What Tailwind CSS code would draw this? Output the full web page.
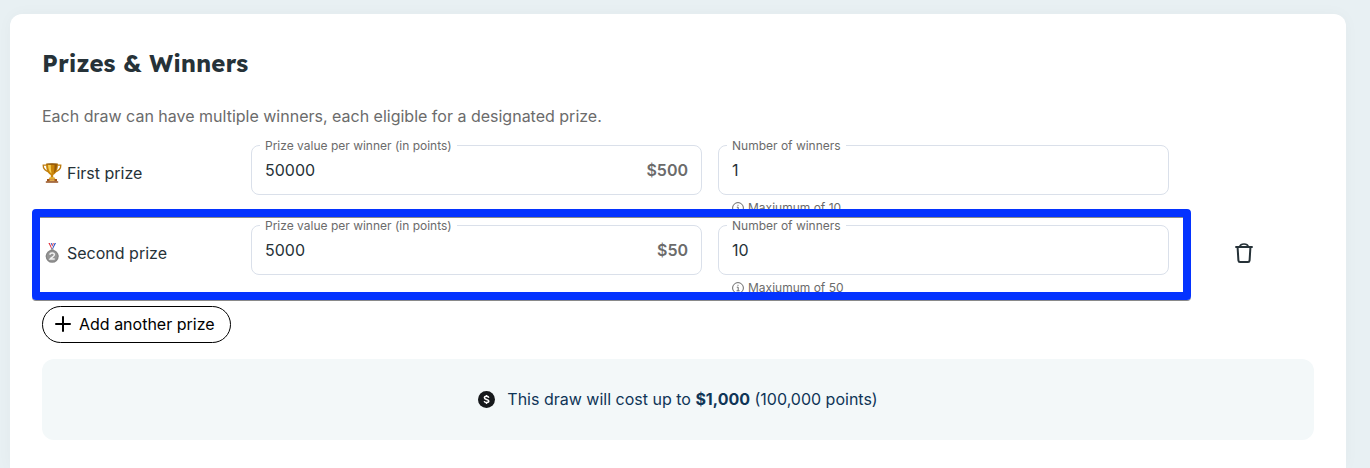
<!DOCTYPE html>
<html lang="en">
<head>
    <meta charset="utf-8">
    <meta name="viewport" content="width=device-width, initial-scale=1">
    <title>Prizes &amp; Winners</title>
    <script src="https://cdn.jsdelivr.net/npm/@tailwindcss/browser@4"></script>
</head>
<body class="min-h-screen overflow-x-hidden bg-[#e8f0f3] font-['Inter',sans-serif] text-base text-[#263238]">
    <main class="flex min-h-screen flex-col pt-3.5 pr-6 pl-2.5">
        <form class="flex-1 rounded-t-xl bg-white p-8 pb-7 shadow-[0_0_16px_rgba(38,50,56,0.03)]">
            <h2 class="mt-px text-2xl leading-8 font-bold font-['Lexend','Inter',sans-serif]">Prizes &amp; Winners</h2>
            <p class="mt-[25px] leading-6 text-[#6b6b6b]">Each draw can have multiple winners, each eligible for a designated prize.</p>

            <div class="mt-[17px]">
                <!-- First prize -->
                <div class="grid h-20 grid-cols-[193fr_451fr_451fr_129fr] gap-x-4">
                    <div class="flex h-14 items-center gap-[5px]">
                        <svg class="size-5 shrink-0" viewBox="0 0 20 20" aria-hidden="true">
                            <path d="M5 2.200H1.200C1 5.500 2.600 7.500 7.500 9.500M15 2.200h3.800C19 5.500 17.400 7.500 12.500 9.500" fill="none" stroke="#bd7d12" stroke-width="1.300"/>
                            <path d="M4 .700h12c0 5.600-1.300 9.400-4.800 11.300v2.700H8.800V12C5.300 10.100 4 6.300 4 .700z" fill="#c98409"/>
                            <path d="M6 1.500h2.800c0 4.200.200 7 .900 9.300C7.200 9.300 6.200 6 6 1.500z" fill="#f7cf55"/>
                            <path d="M12.500 1.500h2.500c-.200 4-1 7-3.200 9 .600-2.700.800-5.500.700-9z" fill="#95590a"/>
                            <ellipse cx="10" cy="1" rx="6" ry=".800" fill="#8a5208"/>
                            <path d="M7.600 14.300h4.800l1 1.700H6.600z" fill="#e2aa2c"/>
                            <path d="M5 16h10v2.300H5z" fill="#a4551a"/>
                            <path d="M7.500 16.400h5v1.400h-5z" fill="#eec25a"/>
                            <path d="M3.800 18.300h12.400v1.400H3.800z" fill="#8d440f"/>
                        </svg>
                        <span>First prize</span>
                    </div>
                    <div class="relative">
                        <label for="value-1" class="absolute -top-[7px] left-[9px] bg-white px-[5px] text-xs leading-4 text-[#6b6b6b]">Prize value per winner (in points)</label>
                        <div class="flex h-[50px] items-center rounded-lg border border-[#dae0ea] px-[13px]">
                            <input id="value-1" type="text" inputmode="numeric" value="50000" class="w-full min-w-0 bg-transparent leading-6 outline-none">
                            <span class="font-semibold text-[#6b6b6b]">$500</span>
                        </div>
                    </div>
                    <div class="relative">
                        <label for="winners-1" class="absolute -top-[7px] left-[9px] bg-white px-[5px] text-xs leading-4 text-[#6b6b6b]">Number of winners</label>
                        <div class="flex h-[50px] items-center rounded-lg border border-[#dae0ea] px-[13px]">
                            <input id="winners-1" type="text" inputmode="numeric" value="1" aria-describedby="hint-1" class="w-full min-w-0 bg-transparent leading-6 outline-none">
                        </div>
                        <p id="hint-1" class="mt-[5px] flex items-center gap-1 pl-3.5 text-xs leading-4 text-[#6b6b6b]">
                            <svg class="size-3 shrink-0" viewBox="0 0 12 12" fill="none" stroke="currentColor" aria-hidden="true">
                                <circle cx="6" cy="6" r="5.400"/>
                                <path d="M4.800 5.200H6.200V8.700M4.600 8.800h3M5.500 3.300h1"/>
                            </svg>
                            Maxiumum of 10
                        </p>
                    </div>
                </div>

                <!-- Second prize, highlighted -->
                <div class="relative grid h-20 grid-cols-[193fr_451fr_451fr_129fr] gap-x-4">
                    <div class="flex h-14 items-center gap-[5px]">
                        <svg class="size-5 shrink-0" viewBox="0 0 20 20" aria-hidden="true">
                            <path d="M6.400 0h1.800l2.800 6.200H9.600z" fill="#e0303c"/>
                            <path d="M7.800 0h1.300l1.900 4.500-.700 1.500z" fill="#fff"/>
                            <path d="M8.700 0h1l1 2.600-.500 1z" fill="#2a52c8"/>
                            <path d="M14 0h-1.800L9.400 6.200h1.400z" fill="#2a52c8"/>
                            <path d="M12.600 0h-1L9.900 4.500l.400 1z" fill="#fff"/>
                            <path d="M11.800 0h-.9l-.8 2.400.4 1z" fill="#e0303c"/>
                            <rect x="8.700" y="5.400" width="3" height="2" rx=".8" fill="#a9a9a9"/>
                            <circle cx="10.200" cy="13.300" r="6.500" fill="#858585"/>
                            <circle cx="10.200" cy="13.300" r="5.200" fill="#959595"/>
                            <path d="M8 11.700c.100-2.300 4.400-2.300 4.400.100 0 1.500-2.900 2.400-4.200 4.100h4.500" fill="none" stroke="#f1f1f1" stroke-width="1.500"/>
                        </svg>
                        <span>Second prize</span>
                    </div>
                    <div class="relative">
                        <label for="value-2" class="absolute -top-[7px] left-[9px] bg-white px-[5px] text-xs leading-4 text-[#6b6b6b]">Prize value per winner (in points)</label>
                        <div class="flex h-[50px] items-center rounded-lg border border-[#dae0ea] px-[13px]">
                            <input id="value-2" type="text" inputmode="numeric" value="5000" class="w-full min-w-0 bg-transparent leading-6 outline-none">
                            <span class="font-semibold text-[#6b6b6b]">$50</span>
                        </div>
                    </div>
                    <div class="relative">
                        <label for="winners-2" class="absolute -top-[7px] left-[9px] bg-white px-[5px] text-xs leading-4 text-[#6b6b6b]">Number of winners</label>
                        <div class="flex h-[50px] items-center rounded-lg border border-[#dae0ea] px-[13px]">
                            <input id="winners-2" type="text" inputmode="numeric" value="10" aria-describedby="hint-2" class="w-full min-w-0 bg-transparent leading-6 outline-none">
                        </div>
                        <p id="hint-2" class="mt-[5px] flex items-center gap-1 pl-3.5 text-xs leading-4 text-[#6b6b6b]">
                            <svg class="size-3 shrink-0" viewBox="0 0 12 12" fill="none" stroke="currentColor" aria-hidden="true">
                                <circle cx="6" cy="6" r="5.400"/>
                                <path d="M4.800 5.200H6.200V8.700M4.600 8.800h3M5.500 3.300h1"/>
                            </svg>
                            Maxiumum of 50
                        </p>
                    </div>
                    <div class="flex h-14 items-center pl-12">
                        <button type="button" aria-label="Remove second prize">
                            <svg class="block size-[22px]" viewBox="0 0 22 22" fill="none" stroke="#263238" aria-hidden="true">
                                <path d="M2.300 5h17.400" stroke-width="2"/>
                                <path d="M6.800 4.500C7.300 2.600 8.500 2 11 2s3.700.600 4.200 2.500" stroke-width="1.700"/>
                                <path d="M4.600 5.500l.8 12.900c.100 1.100.600 1.600 1.600 1.600h8c1 0 1.500-.500 1.600-1.600l.8-12.900" stroke-width="2"/>
                            </svg>
                        </button>
                    </div>
                    <div class="pointer-events-none absolute -top-4 -right-[22px] bottom-[5px] -left-2.5 col-start-1 col-end-4 rounded-sm border-8 border-[#0433ff] shadow-[0_1px_0_#8a8a8a,inset_0_1px_0_#8a8a8a]"></div>
                </div>
            </div>

            <button type="button" class="mt-px flex h-[37px] items-center gap-2 rounded-full border border-black pr-[15px] pb-px pl-3 text-black">
                <svg class="size-4 shrink-0" viewBox="0 0 16 16" fill="none" stroke="currentColor" stroke-width="2" stroke-linecap="round" aria-hidden="true">
                    <path d="M8 1v14M1 8h14"/>
                </svg>
                Add another prize
            </button>

            <div class="mt-4 flex h-[81px] items-center justify-center gap-3 rounded-xl bg-[#f3f8f9] pb-px text-[#0f3557]">
                <svg class="size-[17px] shrink-0" viewBox="0 0 17 17" aria-hidden="true">
                    <circle cx="8.500" cy="8.500" r="8.500" fill="#16191c"/>
                    <path d="M10.800 6.700C10.500 5.700 9.700 5.300 8.500 5.300c-1.400 0-2.100.500-2.100 1.400 0 2.300 4.400 1.100 4.400 3.400 0 1-.900 1.500-2.200 1.500-1.300 0-2.100-.500-2.400-1.500M8.500 3.900v1.300M8.500 11.700V13" fill="none" stroke="#fff" stroke-width="1.500"/>
                </svg>
                <p>This draw will cost up to <strong class="font-bold">$1,000</strong> (100,000 points)</p>
            </div>
        </form>
    </main>
</body>
</html>
